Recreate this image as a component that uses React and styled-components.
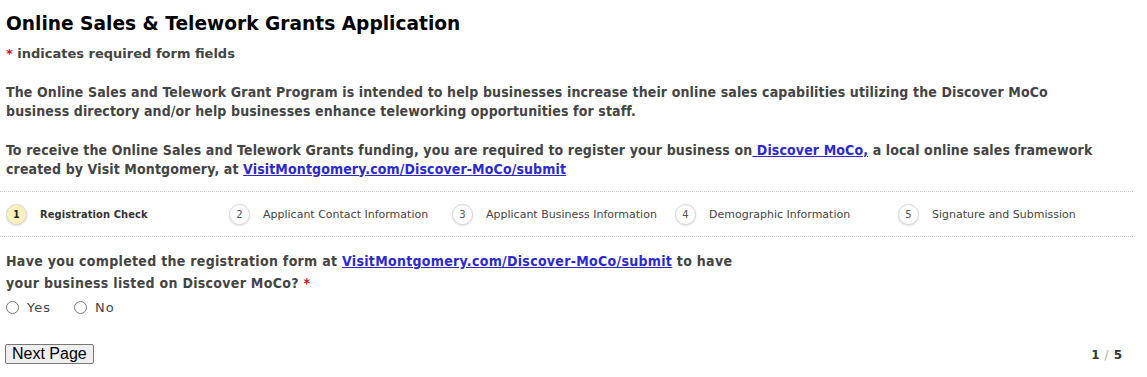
import React from 'react';
import styled, { createGlobalStyle } from 'styled-components';

const GlobalStyle = createGlobalStyle`
  body {
    margin: 0;
    background: #fff;
    font-family: "DejaVu Sans", Verdana, sans-serif;
  }
`;

const Page = styled.div`
  width: 1133px;
  padding-top: 10px;
`;

const Inner = styled.div`
  padding-left: 6px;
  max-width: 1108px;
`;

const Title = styled.h1`
  margin: 0;
  font-size: 18.6px;
  font-weight: bold;
  color: #000;
  line-height: 28px;
`;

const Required = styled.span`
  color: #c8102e;
`;

const Note = styled.div`
  margin-top: 8px;
  font-size: 13px;
  font-weight: bold;
  color: #444;
`;

const Para = styled.p`
  margin: ${(p) => p.$top}px 0 0;
  font-family: "DejaVu Sans Condensed", "DejaVu Sans", sans-serif;
  font-size: 14px;
  font-weight: bold;
  line-height: 18.5px;
  letter-spacing: 0.12px;
  color: #444;
`;

const Link = styled.a`
  color: #2a2ad0;
  text-decoration: underline;
`;

const Steps = styled.div`
  margin-top: 13px;
  border-top: 1px dotted #c8c8c8;
  border-bottom: 1px dotted #c8c8c8;
  height: 44px;
  padding-left: 6px;
  display: grid;
  grid-template-columns: repeat(5, 223px);
  align-items: center;
`;

const Step = styled.div`
  display: flex;
  align-items: center;
  gap: 13px;
  font-size: 11px;
  font-family: ${(p) =>
    p.$active ? '"DejaVu Sans Condensed", "DejaVu Sans", sans-serif' : '"DejaVu Sans", sans-serif'};
  color: ${(p) => (p.$active ? '#333' : '#444')};
  font-weight: ${(p) => (p.$active ? 'bold' : 'normal')};
  letter-spacing: ${(p) => (p.$active ? '0.1px' : '0')};
`;

const Num = styled.span`
  width: 21px;
  height: 21px;
  border-radius: 50%;
  box-sizing: border-box;
  border: 1px solid #d6d6d6;
  box-shadow: 0 1px 2px rgba(0, 0, 0, 0.12);
  background: ${(p) => (p.$active ? '#fbf0bd' : '#fff')};
  color: ${(p) => (p.$active ? '#222' : '#555')};
  font-weight: ${(p) => (p.$active ? 'bold' : 'normal')};
  font-size: 10px;
  letter-spacing: 0;
  display: flex;
  align-items: center;
  justify-content: center;
`;

const Question = styled.div`
  margin-top: 13px;
  width: 745px;
  font-family: "DejaVu Sans Condensed", "DejaVu Sans", sans-serif;
  font-size: 14px;
  font-weight: bold;
  line-height: 22px;
  letter-spacing: 0.3px;
  color: #444;
`;

const Options = styled.div`
  margin-top: 6px;
  display: flex;
  gap: 23px;
  font-size: 13px;
  color: #444;
`;

const Option = styled.label`
  display: flex;
  align-items: center;
  gap: 8px;
  letter-spacing: 1px;
`;

const Radio = styled.input`
  margin: 0;
  width: 13px;
  height: 13px;
`;

const Footer = styled.div`
  margin-top: 29px;
  padding: 0 11px 0 5px;
  display: flex;
  justify-content: space-between;
  align-items: flex-end;
`;

const Button = styled.button`
  font-family: "Liberation Sans", Arial, sans-serif;
  font-size: 16px;
  padding: 0 6px;
  background: #efefef;
  border: 1px solid #767676;
  border-radius: 2px;
  color: #000;
`;

const Pager = styled.div`
  font-size: 12px;
  font-weight: bold;
  color: #333;
  margin-bottom: 2px;
`;

const Slash = styled.span`
  color: #aaa;
  font-weight: normal;
  margin: 0 5px;
`;

const steps = [
  'Registration Check',
  'Applicant Contact Information',
  'Applicant Business Information',
  'Demographic Information',
  'Signature and Submission',
];

const App = () => (
  <Page>
    <GlobalStyle />
    <Inner>
      <Title>Online Sales &amp; Telework Grants Application</Title>
      <Note>
        <Required>*</Required> indicates required form fields
      </Note>
      <Para $top={22}>
        The Online Sales and Telework Grant Program is intended to help businesses increase their
        online sales capabilities utilizing the Discover MoCo business directory and/or help
        businesses enhance teleworking opportunities for staff.
      </Para>
      <Para $top={21}>
        To receive the Online Sales and Telework Grants funding, you are required to register your
        business on<Link href="#"> Discover MoCo,</Link> a local online sales framework created by
        Visit Montgomery, at <Link href="#">VisitMontgomery.com/Discover-MoCo/submit</Link>
      </Para>
    </Inner>
    <Steps>
      {steps.map((s, i) => (
        <Step key={s} $active={i === 0}>
          <Num $active={i === 0}>{i + 1}</Num>
          {s}
        </Step>
      ))}
    </Steps>
    <Inner>
      <Question>
        Have you completed the registration form at{' '}
        <Link href="#">VisitMontgomery.com/Discover-MoCo/submit</Link> to have your business listed
        on Discover MoCo? <Required>*</Required>
      </Question>
      <Options>
        <Option>
          <Radio type="radio" name="reg" /> Yes
        </Option>
        <Option>
          <Radio type="radio" name="reg" /> No
        </Option>
      </Options>
    </Inner>
    <Footer>
      <Button>Next Page</Button>
      <Pager>
        1<Slash>/</Slash>5
      </Pager>
    </Footer>
  </Page>
);

export default App;
